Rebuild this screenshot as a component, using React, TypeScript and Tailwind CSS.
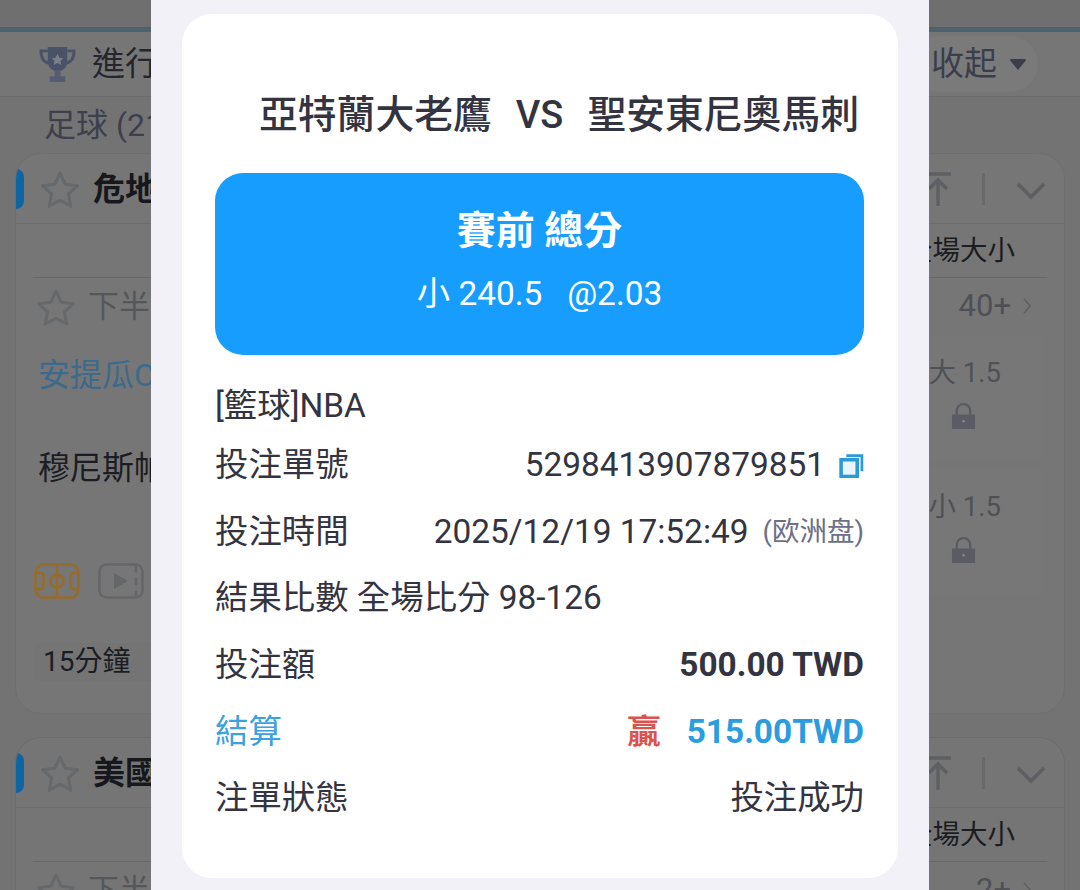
const font = 'font-["Roboto","Noto_Sans_CJK_TC",sans-serif]';

function Star({ className }: { className: string }) {
  return (
    <svg viewBox="0 0 40 38" className={className} fill="none" stroke="#65696c" strokeWidth="3" strokeLinejoin="round">
      <path d="M20 3l5.2 11.2 12.3 1.5-9.1 8.4 2.4 12.1L20 30.2 9.2 36.2l2.4-12.1-9.1-8.4 12.3-1.5z" />
    </svg>
  );
}

function Lock() {
  return (
    <svg viewBox="0 0 26 28" className="w-[25px] h-[27px]">
      <path d="M6 13V8a7 7 0 0 1 14 0v5" fill="none" stroke="#5b5c63" strokeWidth="2.4" />
      <rect x="1" y="12" width="24" height="15" fill="#5b5c63" />
      <circle cx="13" cy="19" r="1.3" fill="#85868a" />
    </svg>
  );
}

function CardHeader({ title }: { title: string }) {
  return (
    <div className="relative h-[70px] border-b border-[#6d6d6f] flex items-center justify-between pl-[24px] pr-[18px]">
      <div className="absolute left-0 top-[15px] w-[8px] h-[40px] rounded-r-[12px] bg-[#0d66a3]" />
      <div className="flex items-center gap-[13px]">
        <Star className="w-[40px] h-[38px]" />
        <span className="text-[32px] font-bold text-[#17181c]">{title}</span>
      </div>
      <div className="flex items-center gap-[31px]">
        <svg viewBox="0 0 26 34" className="w-[26px] h-[34px]" fill="none" stroke="#5e5f63" strokeWidth="3.4">
          <path d="M0 2h26M13 34V9M4 17l9-9 9 9" />
        </svg>
        <div className="w-[3px] h-[32px] bg-[#68696b]" />
        <svg viewBox="0 0 30 18" className="w-[30px] h-[18px] mt-[4px]" fill="none" stroke="#5e5f63" strokeWidth="3.6">
          <path d="M2 2l13 13L28 2" />
        </svg>
      </div>
    </div>
  );
}

function MarketRow({ count }: { count: string }) {
  return (
    <>
      <div className="h-[54px] mx-[17px] border-b border-[#69696b] flex items-center justify-end pr-[32px] text-[27.5px] text-[#1b1c20]">
        全場大小
      </div>
      <div className="flex justify-between pl-[19px] pr-[19px] pt-[10px]">
        <div className="flex items-center gap-[11px] h-[38px]">
          <Star className="w-[42px] h-[38px]" />
          <span className="text-[31px] text-[#55565a]">下半場</span>
        </div>
        <div className="flex items-center gap-[12px] h-[36px] pr-[13px] text-[31px] text-[#4f5056]">
          {count}
          <svg viewBox="0 0 10 20" className="w-[9px] h-[18px]" fill="none" stroke="#5f6064" strokeWidth="1.6">
            <path d="M1 2l7 8-7 8" />
          </svg>
        </div>
      </div>
    </>
  );
}

function OddCell({ label, top }: { label: string; top: string }) {
  return (
    <div className={`w-[200px] rounded-[14px] bg-[#777778] flex flex-col items-end pr-[45px] text-[27.5px] text-[#505156] ${top}`}>
      <span className="leading-[40px]">{label}</span>
      <div className="mr-[25px] mt-[10px]">
        <Lock />
      </div>
    </div>
  );
}

function Row({ left, right, leftClass = "text-[#33343f]" }: { left: string; right?: React.ReactNode; leftClass?: string }) {
  return (
    <div className="h-[66.6px] flex items-center justify-between text-[33.4px] text-[#33343f]">
      <span className={leftClass}>{left}</span>
      {right}
    </div>
  );
}

export default function App() {
  return (
    <div className={`relative w-[1080px] h-[890px] overflow-hidden bg-[#737374] ${font}`}>
      {/* dimmed page behind the dialog */}
      <div className="h-[27px] bg-[#6f6f70]" />
      <div className="h-[5px] bg-[#4c626c]" />
      <div className="h-[65px] border-b border-[#6c6c6e] bg-[#767677] flex items-center justify-between pl-[39px] pr-[42px]">
        <div className="flex items-center gap-[16px]">
          <svg viewBox="0 0 38 38" className="w-[37px] h-[37px]">
            <path d="M9 1h20v14c0 7-4 11-10 11S9 22 9 15z" fill="#4a5268" />
            <path d="M9 5H2c0 8 3 12 9 13M29 5h7c0 8-3 12-9 13" fill="none" stroke="#4a5268" strokeWidth="3" />
            <path d="M16 25h6v6h5v6H11v-6h5z" fill="#555d72" />
            <path d="M19 8l2 4 4 .5-3 3 1 4-4-2-4 2 1-4-3-3 4-.5z" fill="#7b7f8c" />
          </svg>
          <span className="text-[33px] text-[#25262b]">進行中</span>
        </div>
        <div className="w-[128px] h-[56px] rounded-full bg-[#7a7a7b] flex items-center pl-[21px] gap-[12px] text-[33px] text-[#3b3d4a]">
          收起
          <svg viewBox="0 0 18 13" className="w-[18px] h-[13px]">
            <path d="M2 1h14a1 1 0 0 1 .8 1.600L9 12 1.200 2.600A1 1 0 0 1 2 1z" fill="#3b3d4a" />
          </svg>
        </div>
      </div>
      <div className="h-[56px] pl-[44px] flex items-center text-[32px] text-[#3d3f4d]">足球 (21)</div>

      <section className="mx-[15px] h-[561px] rounded-[26px] bg-[#767677] border border-[#6f6f71] overflow-hidden">
        <CardHeader title="危地馬拉" />
        <MarketRow count="40+" />
        <div className="flex justify-between">
          <div className="flex flex-col pl-[22px] text-[32px]">
            <span className="mt-[25px] text-[#3c6a8c]">安提瓜CD</span>
            <span className="mt-[45px] text-[#1c1d22]">穆尼斯帕爾</span>
            <div className="flex gap-[18px] mt-[71px] ml-[-4px]">
              <svg viewBox="0 0 46 36" className="w-[46px] h-[36px]" fill="none" stroke="#976c2a" strokeWidth="2.6">
                <rect x="1.5" y="1.5" width="43" height="33" rx="8" />
                <path d="M23 1.5v33M1.5 10h5a3 3 0 0 1 3 3v10a3 3 0 0 1-3 3h-5M44.500 10h-5a3 3 0 0 0-3 3v10a3 3 0 0 0 3 3h5" />
                <circle cx="23" cy="18" r="6.500" />
              </svg>
              <svg viewBox="0 0 46 36" className="w-[46px] h-[36px]" fill="none" stroke="#65666a" strokeWidth="2.6">
                <rect x="1.500" y="1.500" width="43" height="33" rx="7" />
                <path d="M16 10l14 8-14 8z" fill="#65666a" stroke="none" />
                <path d="M38 1.500v33" strokeDasharray="8 5" />
              </svg>
            </div>
            <div className="mt-[44px] ml-[-4px] w-[130px] h-[38px] pl-[9px] rounded-[8px] bg-[#747475] flex items-center text-[28px] text-[#1c1d22]">
              15分鐘
            </div>
          </div>
          <div className="pr-[18px] flex flex-col gap-[5px]">
            <OddCell label="大 1.5" top="h-[127px] pt-[18px] mt-[9px]" />
            <OddCell label="小 1.5" top="h-[128px] pt-[20px]" />
          </div>
        </div>
      </section>

      <section className="mt-[23px] mx-[15px] h-[200px] rounded-[26px] bg-[#757576] border border-[#6c6c6e] overflow-hidden">
        <CardHeader title="美國職籃" />
        <MarketRow count="2+" />
      </section>

      {/* dialog */}
      <div className="absolute inset-y-0 left-[151px] w-[778px] bg-[#f1f1f7] pt-[14px] px-[31px]">
        <div className="h-[864px] rounded-[30px] bg-white pl-[33px] pr-[34px]">
          <div className="pt-[75px] pl-[44px] pr-[5px] h-[159px] flex justify-between items-start text-[38.8px] font-medium leading-[52px] text-[#33343f]">
            <span>亞特蘭大老鷹</span>
            <span className="text-[38px]">VS</span>
            <span>聖安東尼奧馬刺</span>
          </div>
          <div className="h-[182px] pb-[8px] rounded-[28px] bg-[#169dfd] text-white flex flex-col items-center justify-center">
            <div className="text-[39px] font-bold leading-[50px]">賽前 總分</div>
            <div className="mt-[17px] text-[33.4px] leading-[42px] whitespace-pre">小 240.5   @2.03</div>
          </div>
          <div className="pt-[26px] h-[77px] flex items-center text-[33.4px] text-[#33343f]">[籃球]NBA</div>
          <Row
            left="投注單號"
            right={
              <span className="flex items-center gap-[14px]">
                5298413907879851
                <svg viewBox="0 0 24 24" className="w-[25px] h-[25px]" fill="none" stroke="#2b9bd8" strokeWidth="3.4">
                  <rect x="2" y="6.500" width="15.500" height="16" fill="#eaf5fb" />
                  <path d="M7 2.500h15v15" strokeWidth="2.600" />
                </svg>
              </span>
            }
          />
          <Row
            left="投注時間"
            right={
              <span className="flex items-center gap-[14px]">
                2025/12/19 17:52:49
                <span className="text-[27.5px] text-[#6c7088]">(欧洲盘)</span>
              </span>
            }
          />
          <Row left="結果比數 全場比分 98-126" />
          <Row left="投注額" right={<b className="font-bold">500.00 TWD</b>} />
          <Row
            left="結算"
            leftClass="text-[#3ba1e0]"
            right={
              <span className="flex items-center gap-[26px] font-bold">
                <span className="text-[#d9534f]">贏</span>
                <span className="text-[#2a9de0]">515.00TWD</span>
              </span>
            }
          />
          <Row left="注單狀態" right="投注成功" />
        </div>
      </div>
    </div>
  );
}
